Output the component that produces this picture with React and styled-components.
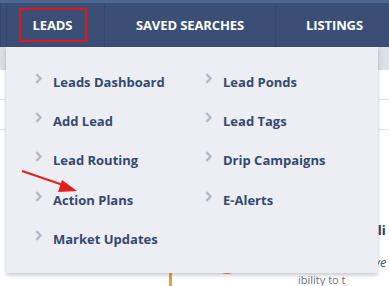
import React from 'react'
import styled, { createGlobalStyle } from 'styled-components'

const Global = createGlobalStyle`
  html, body { margin: 0; padding: 0; }
  body {
    width: 389px;
    height: 286px;
    overflow: hidden;
    background: #ffffff;
    font-family: "Open Sans", "Liberation Sans", sans-serif;
  }
`

const Page = styled.div`
  position: relative;
  width: 389px;
  height: 286px;
  overflow: hidden;
  background: #fff;
`

const TopStrip = styled.div`
  height: 3px;
  background: #4d6792;
`

const NavBar = styled.nav`
  display: flex;
  height: 44px;
  background: #3a4e76;
`

const NavItem = styled.div`
  display: flex;
  align-items: center;
  justify-content: center;
  width: ${(p) => p.w}px;
  flex: none;
  border-left: 1px solid #34476c;
  color: #fff;
  font-weight: 700;
  font-size: 13px;
  letter-spacing: -0.1px;
`

const Boxed = styled.span`
  display: flex;
  align-items: center;
  justify-content: center;
  box-sizing: border-box;
  width: 68px;
  height: 34px;
  margin-right: 6px;
  border: 2.5px solid #e0161b;
`

const SubBar = styled.div`
  height: 23px;
  background: #dde0e7;
`

const Content = styled.div`
  display: flex;
  flex-direction: column;
`

const Line = styled.div`
  height: 29px;
  border-bottom: 1px solid #e3e5ea;
`

const Body = styled.div`
  position: relative;
  height: 150px;
`

const Dropdown = styled.div`
  position: absolute;
  left: 6px;
  top: 47px;
  width: 372px;
  height: 226px;
  box-sizing: border-box;
  padding: 26px 0 0 29px;
  background: #eceef3;
  box-shadow: 0 2px 4px rgba(40, 50, 70, 0.28);
  display: grid;
  grid-template-columns: 170px 1fr;
  grid-auto-rows: 39.2px;
  align-content: start;
`

const Item = styled.div`
  display: flex;
  align-items: flex-start;
  gap: 11px;
  color: #33496f;
  font-weight: 700;
  font-size: 13px;
  line-height: 18px;
  white-space: nowrap;
`

const Chevron = styled.svg`
  width: 7px;
  height: 11px;
  margin-top: 0;
  flex: none;
`

const Arrow = styled.svg`
  position: absolute;
  left: 0;
  top: 0;
  pointer-events: none;
`

const BehindText = styled.span`
  position: absolute;
  font-size: 13px;
  color: ${(p) => p.c};
  font-weight: ${(p) => p.fw};
  font-style: ${(p) => p.fs || 'normal'};
`

const OrangeLine = styled.div`
  position: absolute;
  left: 169px;
  top: 268px;
  width: 3px;
  height: 20px;
  background: #f49b2c;
`

const OrangeDot = styled.div`
  position: absolute;
  left: 216px;
  top: 252px;
  width: 22px;
  height: 22px;
  border-radius: 50%;
  background: #ec8a2a;
`

const left = ['Leads Dashboard', 'Add Lead', 'Lead Routing', 'Action Plans', 'Market Updates']
const right = ['Lead Ponds', 'Lead Tags', 'Drip Campaigns', 'E-Alerts']

function MenuItem({ label }) {
  return (
    <Item>
      <Chevron viewBox='0 0 7 11'>
        <path d='M1.3 1.2 L5.6 5.5 L1.3 9.8' fill='none' stroke='#b4bac5' strokeWidth='2.4' />
      </Chevron>
      {label}
    </Item>
  )
}

export default function App() {
  const cells = []
  for (let i = 0; i < 5; i++) {
    cells.push(<MenuItem key={'l' + i} label={left[i]} />)
    cells.push(right[i] ? <MenuItem key={'r' + i} label={right[i]} /> : <div key={'r' + i} />)
  }
  return (
    <Page>
      <Global />
      <TopStrip />
      <NavBar>
        <NavItem w={5} />
        <NavItem w={97}>
          <Boxed>LEADS</Boxed>
        </NavItem>
        <NavItem w={170}>SAVED SEARCHES</NavItem>
        <NavItem w={117}>LISTINGS</NavItem>
      </NavBar>
      <SubBar />
      <Content>
        <Line />
        <Line />
        <Body />
      </Content>
      <BehindText c='#2b3c5e' fw={700} style={{ left: 374, top: 221 }}>:li</BehindText>
      <BehindText c='#4a5a78' fw={400} fs='italic' style={{ left: 374, top: 253 }}>ve</BehindText>
      <BehindText c='#6b7385' fw={400} style={{ left: 298, top: 272, fontSize: 11 }}>ibility to t</BehindText>
      <OrangeLine />
      <OrangeDot />
      <Dropdown>{cells}</Dropdown>
      <Arrow width='389' height='286' viewBox='0 0 389 286'>
        <line x1='22' y1='171' x2='66' y2='186' stroke='#e3201b' strokeWidth='2.2' />
        <polygon points='77,191 62,180 58,192' fill='#e3201b' />
      </Arrow>
    </Page>
  )
}
